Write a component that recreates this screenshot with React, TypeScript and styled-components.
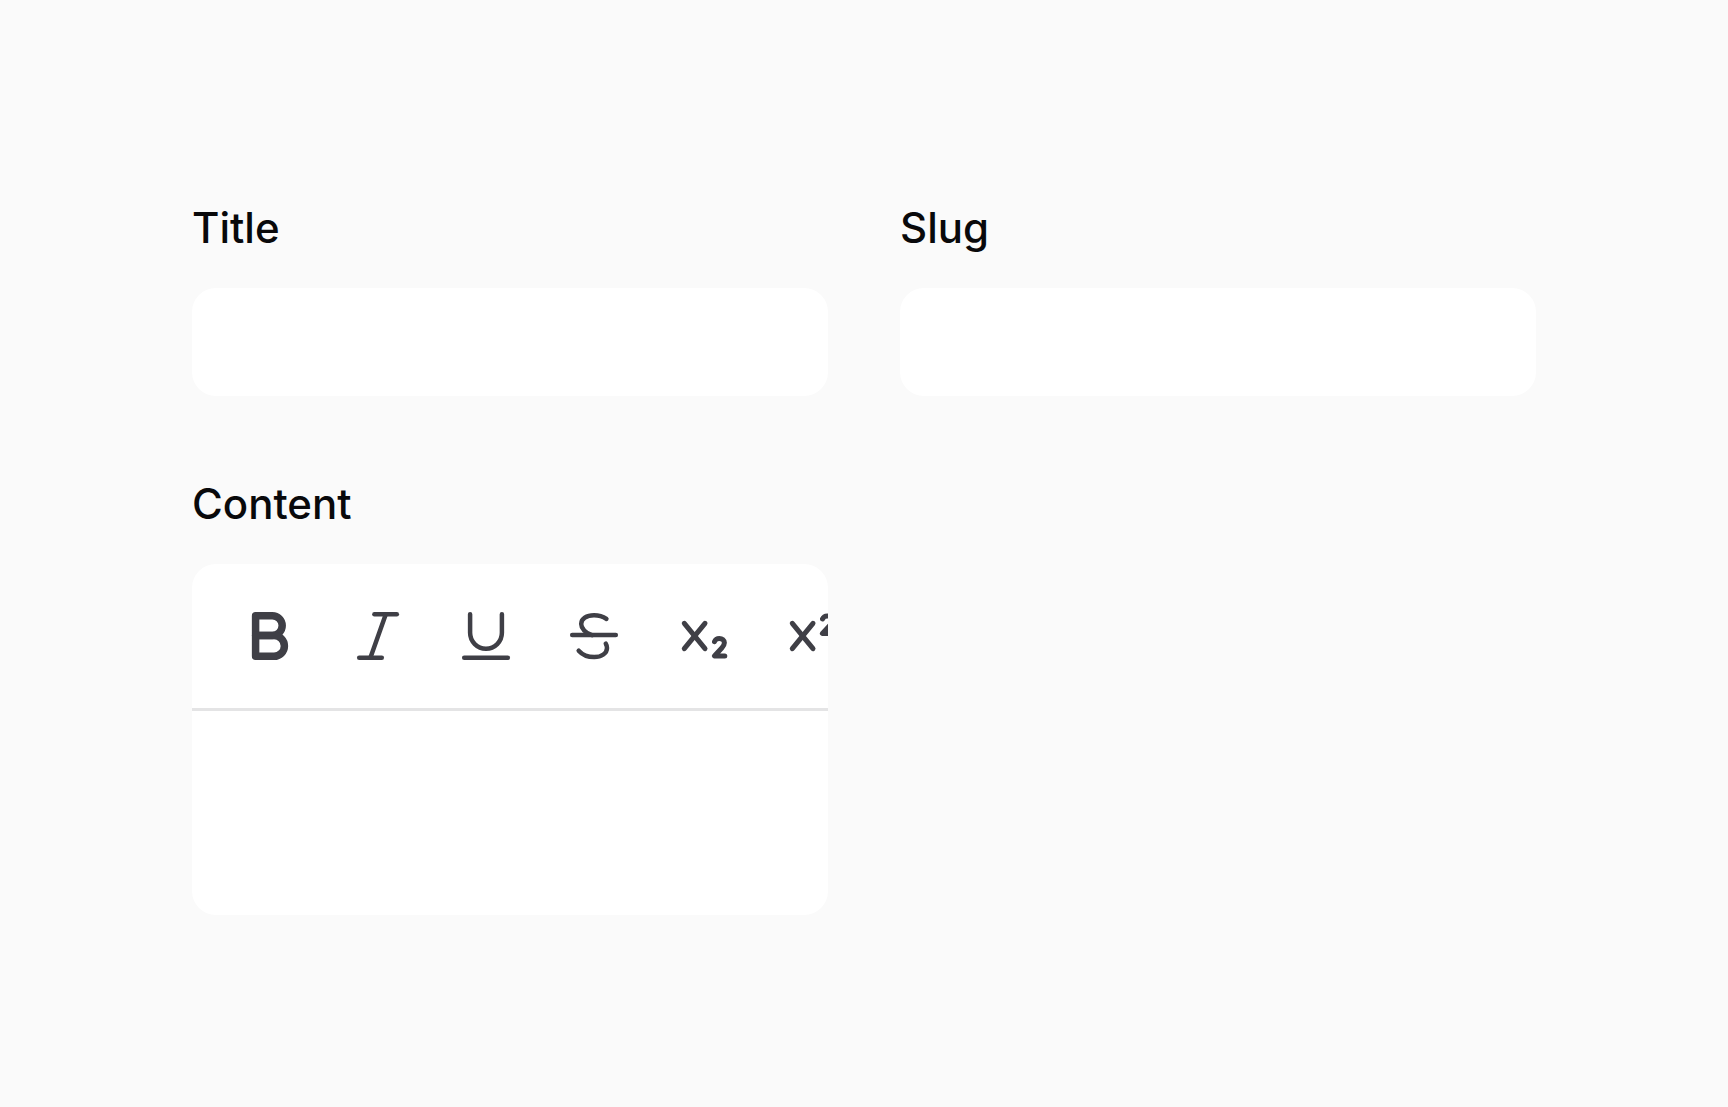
import React from "react";
import styled, { createGlobalStyle } from "styled-components";

const GlobalStyle = createGlobalStyle`
  *, *::before, *::after { box-sizing: border-box; }
  body {
    margin: 0;
    background: #fafafa;
    color: #09090b;
    font-family: Inter, "Liberation Sans", sans-serif;
  }
`;

const Form = styled.form`
  display: grid;
  grid-template-columns: repeat(2, minmax(0, 1fr));
  align-items: start;
  gap: 72px;
  padding: 192px;
`;

const Field = styled.div`
  display: flex;
  flex-direction: column;
  gap: 24px;
`;

const Label = styled.label`
  font-size: 42px;
  font-weight: 500;
  line-height: 72px;
`;

const TextInput = styled.input`
  width: 100%;
  height: 108px;
  padding: 0 36px;
  border: 0;
  border-radius: 24px;
  outline: none;
  background: #ffffff;
  color: inherit;
  font: inherit;
  font-size: 42px;
`;

const Editor = styled.div`
  display: flex;
  flex-direction: column;
  overflow: hidden;
  border-radius: 24px;
  background: #ffffff;
`;

const Toolbar = styled.div`
  display: flex;
  padding: 24px;
  overflow-x: auto;
  scrollbar-width: none;
  border-bottom: 3px solid #e4e4e5;
`;

const ToolButton = styled.button`
  display: flex;
  flex: none;
  align-items: center;
  justify-content: center;
  width: 108px;
  height: 96px;
  padding: 0;
  border: 0;
  border-radius: 18px;
  background: transparent;
  color: #3f3f46;
  cursor: pointer;
`;

const Icon = styled.svg<{ $weight: number }>`
  width: 60px;
  height: 60px;
  fill: none;
  stroke: currentColor;
  stroke-width: ${({ $weight }) => $weight};
  stroke-linecap: round;
  stroke-linejoin: round;
`;

const ContentArea = styled.textarea`
  display: block;
  width: 100%;
  height: 204px;
  padding: 36px;
  border: 0;
  outline: none;
  resize: none;
  background: transparent;
  color: inherit;
  font: inherit;
  font-size: 42px;
`;

interface Tool {
  name: string;
  weight: number;
  paths: string[];
}

const tools: Tool[] = [
  {
    name: "Bold",
    weight: 7.5,
    paths: [
      "M15.6 9.7H32.3a9.9 9.9 0 0 1 0 19.8H15.6Z",
      "M15.6 29.5H34a10.4 10.4 0 0 1 0 20.8H15.6Z",
    ],
  },
  {
    name: "Italic",
    weight: 4.5,
    paths: ["M26.4 8.2H48.8", "M11.2 51.8H33.8", "M37.8 8.2L22.4 51.8"],
  },
  {
    name: "Underline",
    weight: 4.5,
    paths: ["M14.1 8.2V26.8a15.9 15.9 0 0 0 31.8 0V8.2", "M8.2 51.8H51.8"],
  },
  {
    name: "Strikethrough",
    weight: 4.5,
    paths: [
      "M8.2 29.1H51.8",
      "M42.4 12.9C38.5 10.2 34.5 9.2 30 9.2C22.5 9.2 17.2 12.8 17.2 17.9C17.2 22 21.5 27.5 28 29.1",
      "M14.7 44.7C18 48.4 23.8 51.1 30.2 51.1C37.6 51.1 43 47.2 43 42C43 40.3 42.6 39 41.8 37.7",
    ],
  },
  {
    name: "Subscript",
    weight: 5,
    paths: [
      "M12.3 17.3L33 42.7",
      "M33 17.3L12.3 42.7",
      "M42.5 35.6C43.3 33.5 45.2 32.5 47.4 32.5C50.2 32.5 52.4 34.2 52.4 36.8C52.4 38.8 51.4 40.3 49.8 42L42.4 50H52.8",
    ],
  },
  {
    name: "Superscript",
    weight: 5,
    paths: [
      "M12.3 17.3L33 42.7",
      "M33 17.3L12.3 42.7",
      "M42.5 13C43.3 10.9 45.2 9.9 47.4 9.9C50.2 9.9 52.4 11.6 52.4 14.2C52.4 16.2 51.4 17.7 49.8 19.4L42.4 27.4H52.8",
    ],
  },
];

export default function App() {
  return (
    <>
      <GlobalStyle />
      <Form onSubmit={(event) => event.preventDefault()}>
        <Field>
          <Label htmlFor="title">Title</Label>
          <TextInput id="title" name="title" type="text" />
        </Field>
        <Field>
          <Label htmlFor="slug">Slug</Label>
          <TextInput id="slug" name="slug" type="text" />
        </Field>
        <Field>
          <Label htmlFor="content">Content</Label>
          <Editor>
            <Toolbar role="toolbar" aria-label="Formatting">
              {tools.map(({ name, weight, paths }) => (
                <ToolButton key={name} type="button" aria-label={name}>
                  <Icon $weight={weight} viewBox="0 0 60 60" aria-hidden="true">
                    {paths.map((d) => (
                      <path key={d} d={d} />
                    ))}
                  </Icon>
                </ToolButton>
              ))}
            </Toolbar>
            <ContentArea id="content" name="content" />
          </Editor>
        </Field>
      </Form>
    </>
  );
}
